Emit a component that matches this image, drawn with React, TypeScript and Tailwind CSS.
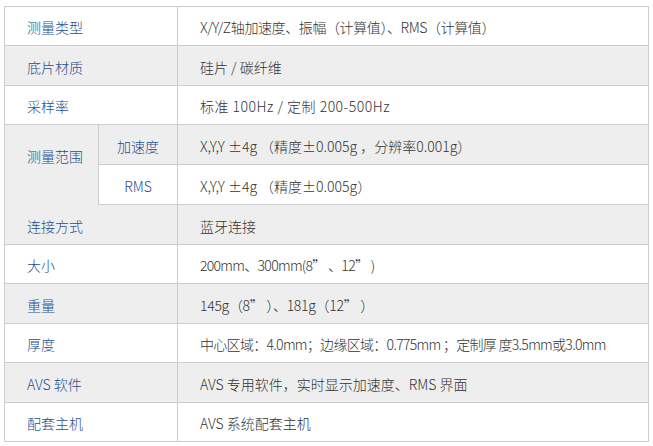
import type { ReactNode } from "react";

const font = { fontFamily: '"Noto Sans CJK SC", "Microsoft YaHei", sans-serif' };

type Row = { label: string; value: ReactNode; gray?: boolean; tight?: string };

const top: Row[] = [
  { label: "测量类型", value: "X/Y/Z轴加速度、振幅（计算值）、RMS（计算值）", tight: "tracking-[-0.4px]" },
  { label: "底片材质", value: "硅片 / 碳纤维", gray: true },
  { label: "采样率", value: "标准 100Hz / 定制 200-500Hz", tight: "tracking-[0.5px]" },
];

const bottom: Row[] = [
  { label: "大小", value: "200mm、300mm(8” 、12” )", tight: "tracking-[-0.7px]" },
  { label: "重量", value: "145g（8” ）、181g（12” ）", gray: true, tight: "tracking-[-0.3px]" },
  {
    label: "厚度",
    value: "中心区域：4.0mm；边缘区域：0.775mm ；定制厚 度3.5mm或3.0mm",
    tight: "tracking-[-0.7px]",
  },
  { label: "AVS 软件", value: "AVS 专用软件，实时显示加速度、RMS 界面", gray: true },
  { label: "配套主机", value: "AVS 系统配套主机" },
];

function Label({ text, gray }: { text: string; gray?: boolean }) {
  return (
    <div
      className={`col-span-2 flex items-center pt-[3px] pl-[22px] border-r border-b border-[#cccccc] text-[#1f4e8f] ${
        gray ? "bg-[#eeeeee]" : "bg-white"
      }`}
    >
      {text}
    </div>
  );
}

function Value({ text, gray, tight }: { text: ReactNode; gray?: boolean; tight?: string }) {
  return (
    <div
      className={`flex items-center pt-[3px] pl-[22px] border-r border-b border-[#cccccc] text-[#333333] whitespace-pre ${
        gray ? "bg-[#eeeeee]" : "bg-white"
      } ${tight ?? ""}`}
    >
      <span>{text}</span>
    </div>
  );
}

export default function App() {
  return (
    <div className="w-[653px] h-[446px] bg-white pl-[4px] pt-[6px] text-[14px] font-light" style={font}>
      <div className="grid w-[645px] grid-cols-[94px_79px_471px] grid-rows-[39px_40px_39px_40px_40px_40px_39px_40px_39px_40px_39px] border-l border-t border-[#cccccc]">
        {top.map((r) => [
          <Label key={r.label} text={r.label} gray={r.gray} />,
          <Value key={r.label + "-v"} text={r.value} gray={r.gray} tight={r.tight} />,
        ])}

        {/* 测量范围 */}
        <div className="row-span-2 bg-[#eeeeee] border-r border-[#cccccc] pl-[22px] pt-[21px] text-[#1f4e8f] leading-[20px]">
          测量范围
        </div>
        <div className="flex items-center justify-center pt-[3px] border-r border-b border-[#cccccc] bg-[#eeeeee] text-[#1f4e8f]">
          加速度
        </div>
        <Value text="X,Y,Y ±4g （精度±0.005g ，分辨率0.001g）" gray />
        <div className="flex items-center justify-center pt-[3px] border-r border-b border-[#cccccc] bg-white text-[#1f4e8f]">
          RMS
        </div>
        <Value text="X,Y,Y ±4g （精度±0.005g）" />

        <Label text="连接方式" gray />
        <Value text="蓝牙连接" gray />

        {bottom.map((r) => [
          <Label key={r.label} text={r.label} gray={r.gray} />,
          <Value key={r.label + "-v"} text={r.value} gray={r.gray} tight={r.tight} />,
        ])}
      </div>
    </div>
  );
}
